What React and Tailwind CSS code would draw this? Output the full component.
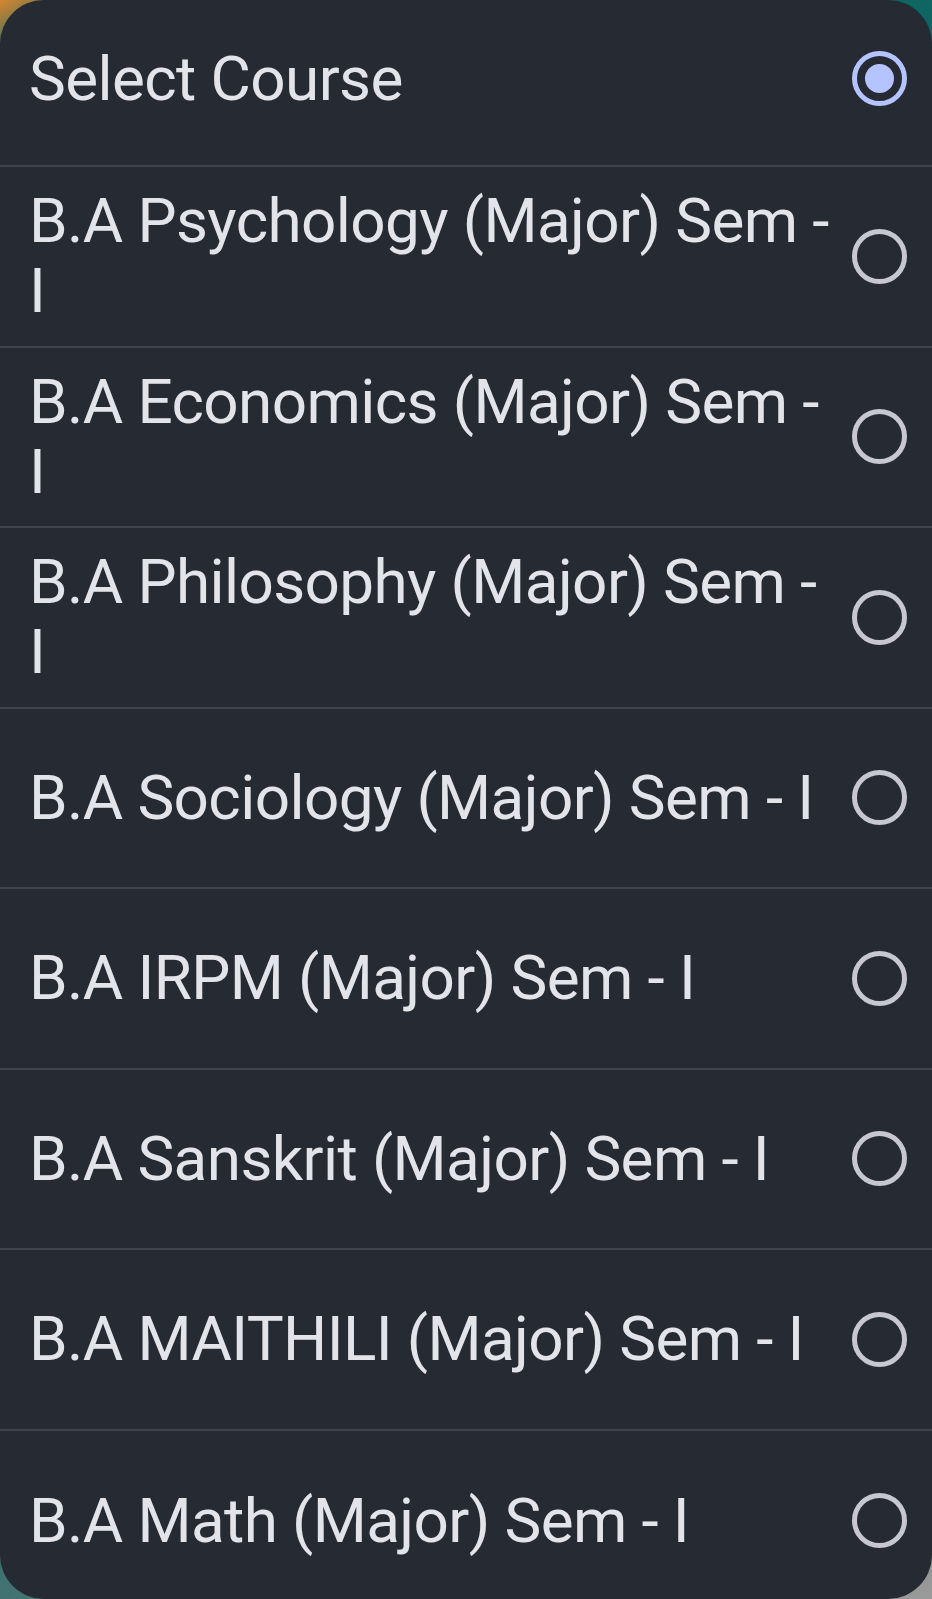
import { useState } from 'react';

const courses = [
  'B.A Psychology (Major) Sem\u00a0- I',
  'B.A Economics (Major) Sem\u00a0- I',
  'B.A Philosophy (Major) Sem\u00a0- I',
  'B.A Sociology (Major) Sem\u00a0- I',
  'B.A IRPM (Major) Sem\u00a0- I',
  'B.A Sanskrit (Major) Sem\u00a0- I',
  'B.A MAITHILI (Major) Sem\u00a0- I',
  'B.A Math (Major) Sem\u00a0- I',
];

function Radio({ checked }) {
  return (
    <span
      className={`flex h-[55px] w-[55px] shrink-0 items-center justify-center rounded-full border-[5px] ${
        checked ? 'border-[#b5c4ff]' : 'border-[#c6c7d0]'
      }`}
    >
      {checked && <span className="h-[29px] w-[29px] rounded-full bg-[#b5c4ff]" />}
    </span>
  );
}

export default function App() {
  const [selected, setSelected] = useState(-1);

  return (
    <div className="h-[1599px] w-[932px] overflow-hidden bg-[linear-gradient(150deg,#d9862e_0%,#0f6b68_3%,#0e5c5a_60%,#9a9a9a_100%)]">
      <div
        className="h-full w-full overflow-hidden rounded-[44px] bg-[#262a33] text-[#e3e3ea]"
        style={{ fontFamily: 'Roboto, "Noto Sans", sans-serif' }}
      >
        {/* Header row */}
        <button
          onClick={() => setSelected(-1)}
          className="flex h-[167px] w-full items-center justify-between border-b-2 border-[#40444d] pb-2 pl-[29px] pr-[25px] text-left"
        >
          <span className="text-[62px] leading-[70px] tracking-[-0.6px]">Select Course</span>
          <Radio checked={selected === -1} />
        </button>

        {/* Course list */}
        {courses.map((name, i) => (
          <button
            key={name}
            onClick={() => setSelected(i)}
            className="flex h-[180.5px] w-full items-center border-b-2 border-[#40444d] pl-[29px] pr-[25px] text-left last:border-b-0"
          >
            <span className="flex-1 pr-[10px] text-[62px] leading-[70px] tracking-[-0.6px]">{name}</span>
            <Radio checked={selected === i} />
          </button>
        ))}
      </div>
    </div>
  );
}
